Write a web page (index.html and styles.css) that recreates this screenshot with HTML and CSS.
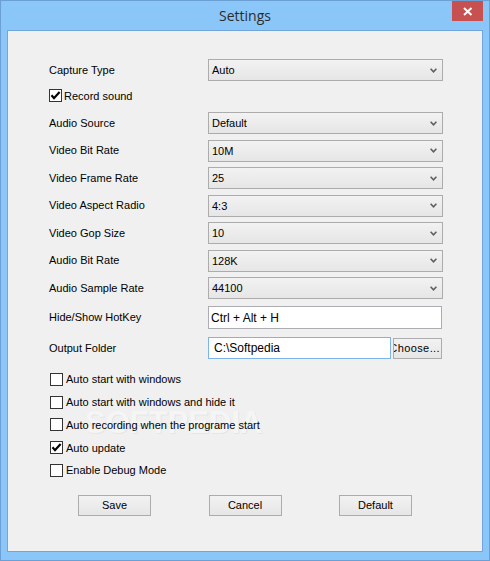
FILE: index.html
```html
<!DOCTYPE html>
<html>
<head>
<meta charset="utf-8">
<title>Settings</title>
<link rel="stylesheet" href="styles.css">
</head>
<body>
<div class="window">
  <div class="titlebar">
    <span class="title">Settings</span>
    <div class="close">
      <svg width="31" height="20" viewBox="0 0 31 20"><path d="M12 7 L19.5 14 M19.5 7 L12 14" stroke="#fff" stroke-width="2" fill="none"/></svg>
    </div>
  </div>
  <div class="client">
    <div class="watermark">SOFTPEDIA</div>
    <div class="form">
      <div class="row first"><span class="label">Capture Type</span><div class="combo"><span>Auto</span><svg class="arrow" width="7" height="5" viewBox="0 0 7 5"><polyline points="0.6,0.8 3.5,3.8 6.4,0.8" fill="none" stroke="#5f5f5f" stroke-width="1.6"/></svg></div></div>
      <div class="record"><span class="box"><svg width="11" height="11" viewBox="0 0 11 11"><polyline points="1.5,5.3 4,8.2 9.6,2" fill="none" stroke="#000" stroke-width="2.2"/></svg></span><span class="rec-text">Record sound</span></div>
      <div class="row first"><span class="label">Audio Source</span><div class="combo"><span>Default</span><svg class="arrow" width="7" height="5" viewBox="0 0 7 5"><polyline points="0.6,0.8 3.5,3.8 6.4,0.8" fill="none" stroke="#5f5f5f" stroke-width="1.6"/></svg></div></div>
      <div class="row"><span class="label">Video Bit Rate</span><div class="combo"><span>10M</span><svg class="arrow" width="7" height="5" viewBox="0 0 7 5"><polyline points="0.6,0.8 3.5,3.8 6.4,0.8" fill="none" stroke="#5f5f5f" stroke-width="1.6"/></svg></div></div>
      <div class="row"><span class="label">Video Frame Rate</span><div class="combo"><span>25</span><svg class="arrow" width="7" height="5" viewBox="0 0 7 5"><polyline points="0.6,0.8 3.5,3.8 6.4,0.8" fill="none" stroke="#5f5f5f" stroke-width="1.6"/></svg></div></div>
      <div class="row"><span class="label">Video Aspect Radio</span><div class="combo"><span>4:3</span><svg class="arrow" width="7" height="5" viewBox="0 0 7 5"><polyline points="0.6,0.8 3.5,3.8 6.4,0.8" fill="none" stroke="#5f5f5f" stroke-width="1.6"/></svg></div></div>
      <div class="row"><span class="label">Video Gop Size</span><div class="combo"><span>10</span><svg class="arrow" width="7" height="5" viewBox="0 0 7 5"><polyline points="0.6,0.8 3.5,3.8 6.4,0.8" fill="none" stroke="#5f5f5f" stroke-width="1.6"/></svg></div></div>
      <div class="row"><span class="label">Audio Bit Rate</span><div class="combo"><span>128K</span><svg class="arrow" width="7" height="5" viewBox="0 0 7 5"><polyline points="0.6,0.8 3.5,3.8 6.4,0.8" fill="none" stroke="#5f5f5f" stroke-width="1.6"/></svg></div></div>
      <div class="row"><span class="label">Audio Sample Rate</span><div class="combo"><span>44100</span><svg class="arrow" width="7" height="5" viewBox="0 0 7 5"><polyline points="0.6,0.8 3.5,3.8 6.4,0.8" fill="none" stroke="#5f5f5f" stroke-width="1.6"/></svg></div></div>
      <div class="row hotkey"><span class="label">Hide/Show HotKey</span><div class="textbox hk">Ctrl + Alt + H</div></div>
      <div class="row output"><span class="label">Output Folder</span><div class="textbox focus">C:\Softpedia</div><div class="choose"><span>Choose...</span></div></div>
    </div>
    <div class="options">
      <div class="opt"><span class="box"></span><span>Auto start with windows</span></div>
      <div class="opt"><span class="box"></span><span>Auto start with windows and hide it</span></div>
      <div class="opt"><span class="box"></span><span>Auto recording when the programe start</span></div>
      <div class="opt"><span class="box"><svg width="11" height="11" viewBox="0 0 11 11"><polyline points="1.5,5.3 4,8.2 9.6,2" fill="none" stroke="#000" stroke-width="2.2"/></svg></span><span>Auto update</span></div>
      <div class="opt"><span class="box"></span><span>Enable Debug Mode</span></div>
    </div>
    <div class="buttons">
      <div class="btn">Save</div>
      <div class="btn">Cancel</div>
      <div class="btn">Default</div>
    </div>
  </div>
</div>
</body>
</html>
```
FILE: styles.css
```css
html, body {
  margin: 0;
  padding: 0;
}
body {
  width: 490px;
  height: 561px;
  overflow: hidden;
  font-family: "Liberation Sans", Arial, sans-serif;
  font-size: 11px;
  color: #000;
}
.window {
  box-sizing: border-box;
  width: 490px;
  height: 561px;
  border: 1px solid #6c9fd3;
  background: #8bc6f9;
  display: flex;
  flex-direction: column;
}
.titlebar {
  flex: none;
  height: 29px;
  position: relative;
  display: flex;
  align-items: center;
  justify-content: center;
}
.title {
  font-family: "Open Sans", "Noto Sans", sans-serif;
  font-size: 14px;
  color: #2b2b2b;
  margin-top: -1px;
}
.close {
  position: absolute;
  top: 0;
  right: 6px;
  width: 31px;
  height: 20px;
  background: #c75050;
}
.close svg {
  display: block;
}
.client {
  flex: 1;
  margin: 0 6px 8px 6px;
  border: 1px solid #72a6da;
  background: #f0f0f0;
  position: relative;
}
.watermark {
  position: absolute;
  left: 77px;
  top: 374px;
  font-family: "Liberation Sans", Arial, sans-serif;
  font-weight: bold;
  font-size: 31px;
  color: #f5f5f5;
  text-shadow: 1px 1px 0 #e6e6e6;
  z-index: 0;
}
.form, .options, .buttons {
  position: relative;
  z-index: 1;
}
.form {
  padding: 28px 0 0 41px;
}
.row {
  display: flex;
  align-items: center;
  height: 22px;
  margin-top: 5.5px;
}
.row.first {
  margin-top: 0;
}
.label {
  width: 159px;
  flex: none;
  margin-top: -1px;
}
.combo {
  box-sizing: border-box;
  width: 235px;
  height: 22px;
  border: 1px solid #acacac;
  background: linear-gradient(#f2f2f2, #e6e6e6);
  display: flex;
  align-items: center;
  justify-content: space-between;
  padding: 0 5px 0 3px;
}
.arrow {
  display: block;
}
.record {
  display: flex;
  align-items: center;
  padding: 8px 0 10px 0;
  height: 13px;
}
.rec-text {
  margin-left: 2px;
}
.box {
  box-sizing: border-box;
  width: 13px;
  height: 13px;
  border: 1px solid #333;
  background: #fff;
  flex: none;
}
.box svg {
  display: block;
}
.hotkey {
  margin-top: 7px;
  height: 23px;
}
.output {
  margin-top: 8px;
  height: 22px;
}
.textbox {
  box-sizing: border-box;
  height: 100%;
  border: 1px solid #abadb3;
  background: #fff;
  display: flex;
  align-items: center;
  padding-left: 2px;
  font-size: 12px;
}
.textbox.hk {
  width: 234px;
}
.textbox.focus {
  width: 183px;
  border-color: #7eb4ea;
  padding-left: 5px;
}
.choose {
  box-sizing: border-box;
  width: 49px;
  height: 21px;
  margin-left: 2px;
  border: 1px solid #acacac;
  background: linear-gradient(#f2f2f2, #e6e6e6);
  display: flex;
  align-items: center;
  justify-content: flex-end;
  padding-right: 1px;
  overflow: hidden;
  white-space: nowrap;
}
.choose span {
  flex: none;
  letter-spacing: 0.4px;
}
.options {
  padding: 9px 0 0 42px;
}
.opt {
  display: flex;
  align-items: center;
  gap: 3px;
  height: 22.75px;
}
.buttons {
  display: flex;
  gap: 57.5px;
  padding: 13px 0 0 70px;
}
.btn {
  box-sizing: border-box;
  width: 73px;
  height: 21px;
  border: 1px solid #acacac;
  background: linear-gradient(#f2f2f2, #e6e6e6);
  display: flex;
  align-items: center;
  justify-content: center;
}
```
